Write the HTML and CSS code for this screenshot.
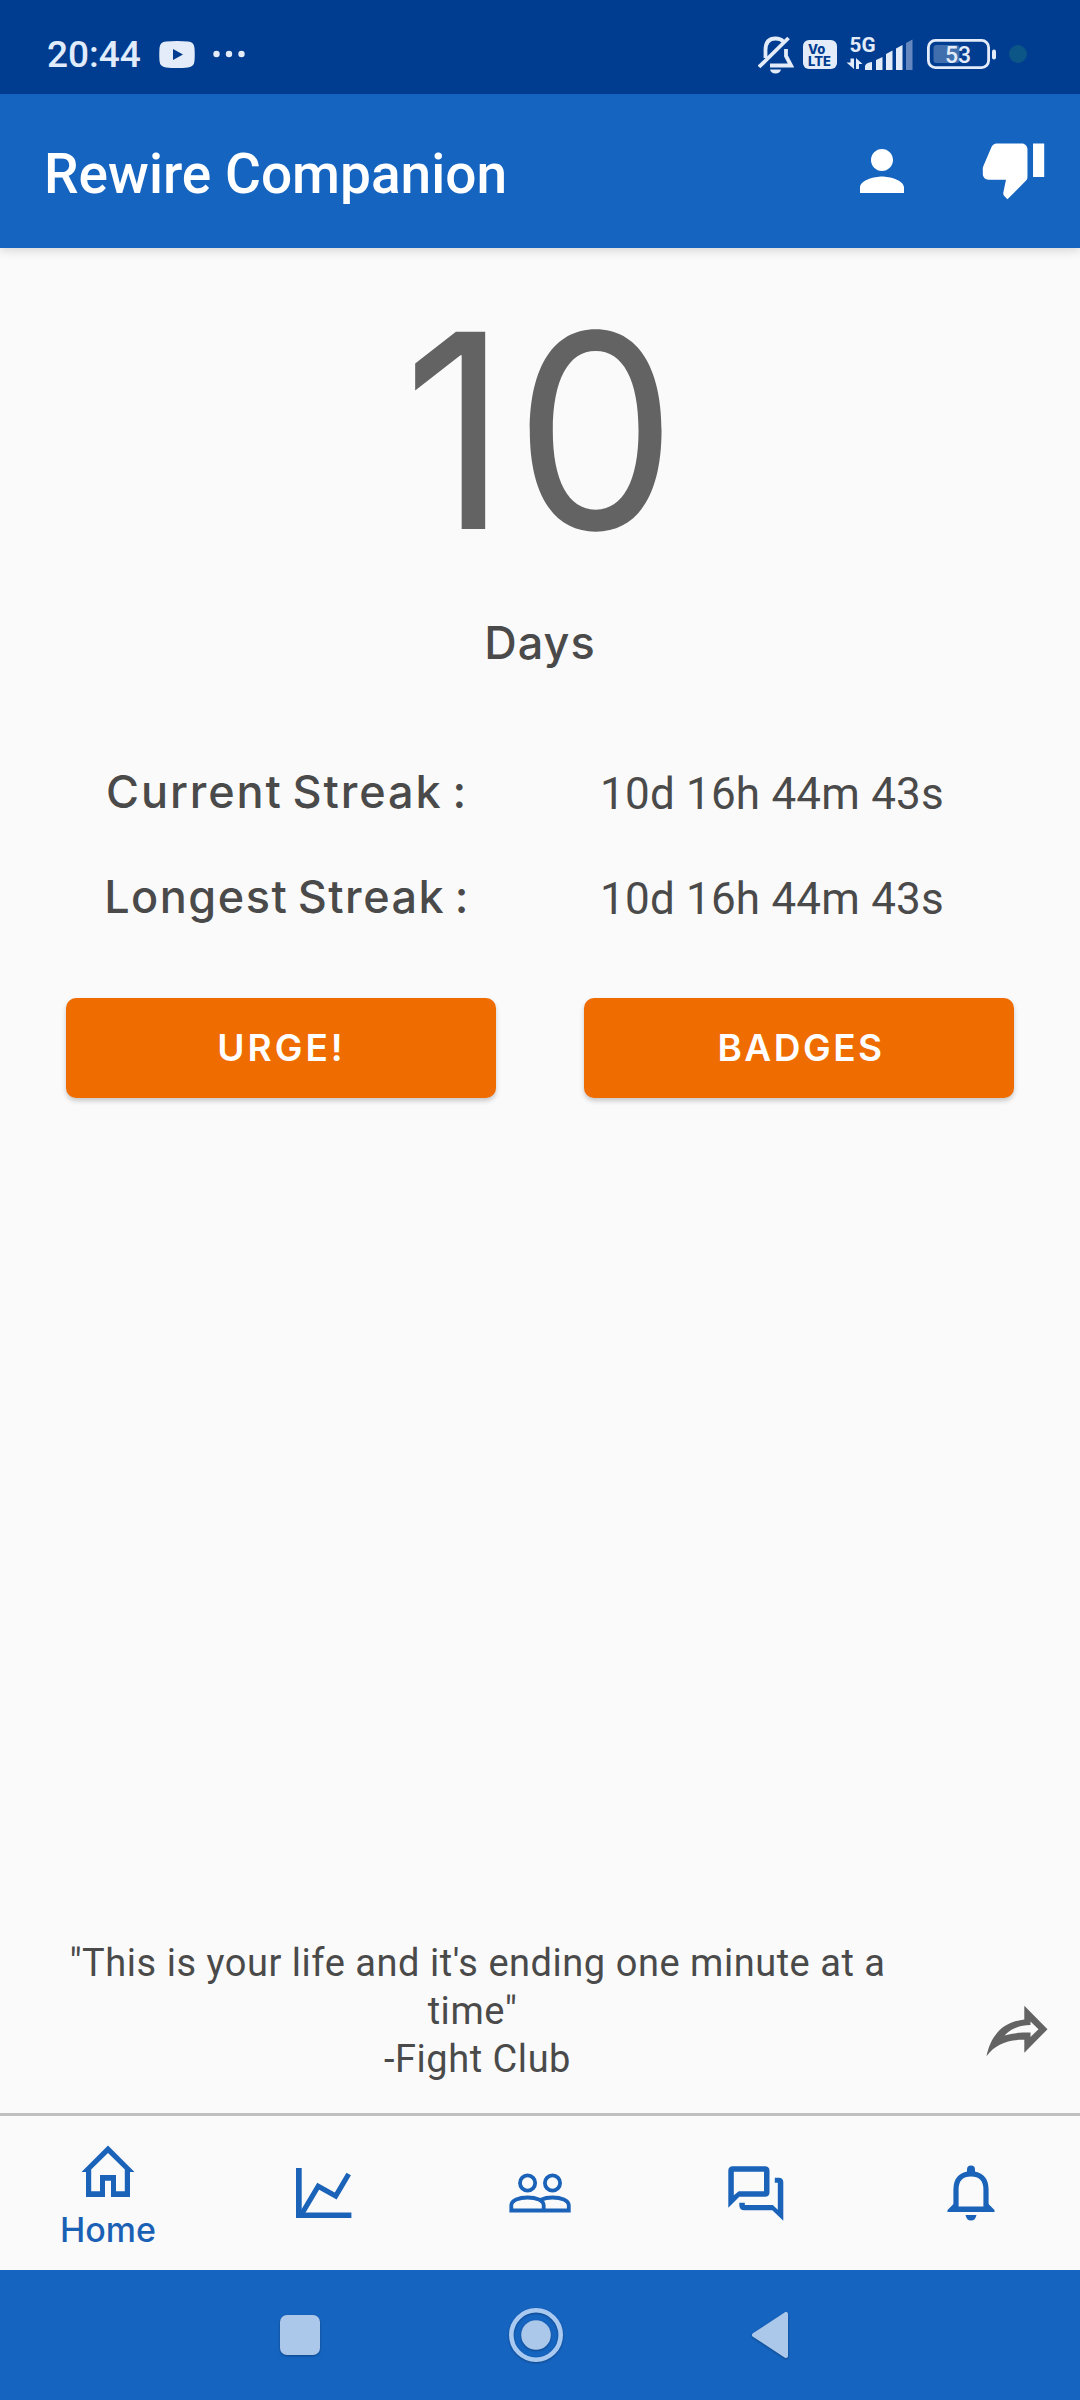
FILE: index.html
```html
<!DOCTYPE html>
<html lang="en">
<head>
<meta charset="utf-8">
<title>Rewire Companion</title>
<link rel="stylesheet" href="styles.css">
</head>
<body>
<div class="screen">
  <div class="status-bar">
    <div class="status-left">
      <span class="clock">20:44</span>
      <svg class="video-icon" width="36" height="27" viewBox="0 0 36 27"><path fill-rule="evenodd" d="M7 .6Q18-.5 29 .6Q35 1 35.500 7Q36 13.500 35.500 20Q35 26 29 26.400Q18 27.500 7 26.400Q1 26 .5 20Q0 13.500 .5 7Q1 1 7 .6ZM14 8V19L24 13.500Z"/></svg>
      <svg class="more-icon" width="32" height="8" viewBox="0 0 32 8"><circle cx="3.500" cy="4" r="3.200"/><circle cx="16" cy="4" r="3.200"/><circle cx="28.500" cy="4" r="3.200"/></svg>
    </div>
    <div class="status-right">
      <svg class="mute-icon" width="36" height="38" viewBox="758 36 36 38"><path class="line" d="M765.500 58V50C765.500 42 769.500 38.500 775.500 38.500C779 38.500 781.500 39.500 783.300 41.500M786 49V56L791 65.500H770"/><path class="line" d="M759 67L788.500 38"/><path d="M770 69.500H781Q780 73.500 775.500 73.500T770 69.500Z"/></svg>
      <div class="volte"><span>Vo</span><span>LTE</span></div>
      <svg class="signal" width="68" height="48" viewBox="846 30 68 48">
        <text class="net" x="849.500" y="52" textLength="26" lengthAdjust="spacingAndGlyphs">5G</text>
        <path d="M850.500 58.500H854V69L846.500 62.500H850.500ZM856 69V58L862.500 64H859V69Z"/>
        <path d="M865 70V66Q866 62.500 872 62V70ZM876 70V60L882.500 57V70ZM886 70V54L892.500 50.500V70ZM896 70V48.500L902.500 45V70Z"/>
        <path class="dim" d="M906 70V43L912.500 39.500V70Z"/>
      </svg>
      <svg class="battery" width="70" height="30" viewBox="927 39 70 30">
        <rect class="level" x="933.500" y="45" width="26" height="18" rx="3"/>
        <rect class="line" x="928.400" y="40.400" width="60.200" height="27.200" rx="7"/>
        <rect x="992" y="49.500" width="4" height="10" rx="2"/>
        <text class="pct" x="958" y="62.500" text-anchor="middle">53</text>
      </svg>
      <span class="privacy-dot"></span>
    </div>
  </div>

  <header class="app-bar">
    <h1 class="title">Rewire Companion</h1>
    <svg class="person-icon" width="66" height="66" viewBox="0 0 24 24"><path d="M12 12c2.210 0 4-1.790 4-4s-1.790-4-4-4-4 1.790-4 4 1.790 4 4 4zm0 2c-2.670 0-8 1.340-8 4v2h16v-2c0-2.660-5.330-4-8-4z"/></svg>
    <svg class="thumb-icon" width="67" height="67" viewBox="0 0 24 24"><path d="M15 3H6c-.83 0-1.540.5-1.840 1.220l-3.020 7.050c-.09.23-.14.47-.14.73v2c0 1.100.9 2 2 2h6.310l-.95 4.570-.03.320c0 .41.17.79.44 1.060L9.830 23l6.590-6.590c.36-.36.58-.86.58-1.410V5c0-1.100-.9-2-2-2zm4 0v12h4V3h-4z"/></svg>
  </header>

  <main class="content">
    <div class="count">10</div>
    <div class="unit">Days</div>
    <div class="streaks">
      <span class="streak-label">Current Streak :</span><span class="streak-value">10d 16h 44m 43s</span>
      <span class="streak-label long">Longest Streak :</span><span class="streak-value">10d 16h 44m 43s</span>
    </div>
    <div class="actions">
      <button class="action urge">URGE!</button>
      <button class="action">BADGES</button>
    </div>
    <div class="quote">
      <p class="quote-text">"This is your life and it's ending one minute at a<br>time"&nbsp;<br>-Fight Club</p>
      <svg class="share-icon" width="62" height="52" viewBox="986 2005.500 62 52"><path fill-rule="evenodd" d="M1024.300 2006.300L1047.500 2029.700L1024.300 2053.300V2040.200C1007 2040 995 2045 986.500 2056.700C990 2040 999 2023 1024.300 2020ZM1030.500 2022V2025.500C1019 2026 1011 2029 1004.500 2036C1012 2033.500 1020 2033 1030.500 2033V2037.500L1038.500 2029.700Z"/></svg>
    </div>
  </main>

  <nav class="tabs">
    <div class="tab home">
      <svg width="54" height="52" viewBox="81 2145 54 52"><path fill-rule="evenodd" d="M108 2145.500L134.500 2172H130V2197H111V2180.800H105V2197H86V2172H81.500ZM108 2153L91.200 2169.500V2191.300H100V2175H116V2191.300H124.800V2169.500Z"/></svg>
      <span>Home</span>
    </div>
    <div class="tab"><svg width="56" height="50" viewBox="296.300 2168 56 50"><path d="M296.300 2168H302V2212.500H351.700V2218H296.300Z"/><path class="line" d="M302 2214L318.500 2186.200L336 2196L349 2174"/></svg></div>
    <div class="tab people"><svg width="62" height="40" viewBox="509 2173.500 62 40"><g class="line thin"><circle cx="527.600" cy="2183.500" r="7.600"/><circle cx="552.500" cy="2183.500" r="7.600"/><path d="M511.300 2211V2206C511.300 2200.800 519 2198 527.600 2198S543.700 2200.800 543.700 2206V2211ZM541 2200.200C544 2198.800 548.500 2198 552.500 2198C561 2198 568.800 2200.800 568.800 2206V2211H543"/></g></svg></div>
    <div class="tab"><svg width="56" height="55" viewBox="728.200 2165.300 56 55"><path fill-rule="evenodd" d="M728.500 2207V2170Q728.500 2165.500 733 2165.500H765Q769.700 2165.500 769.700 2170V2191.500Q769.700 2196 765 2196H739.500ZM734 2194.500L739 2190.500H764.200V2171H734Z"/><path d="M775 2177H779Q783.500 2177 783.500 2181.500V2220L772.500 2209.500H744.500Q739.500 2209.500 739.500 2204.500V2202H745V2204.300H773L778 2209V2182H775Z"/></svg></div>
    <div class="tab bell"><svg width="48" height="56" viewBox="946.500 2165.500 48 56"><path class="line" d="M955.500 2209V2190C955.500 2180 961 2174.300 970.500 2174.300S985.500 2180 985.500 2190V2209"/><path d="M966.500 2174V2170Q966.500 2166 970.500 2166T974.500 2170V2174ZM947 2212.500V2210.500L953.500 2204V2207H987.500V2204L994 2210.500V2212.500ZM965 2215.500H976Q975 2221 970.500 2221T965 2215.500Z"/></svg></div>
  </nav>

  <div class="system-nav">
    <svg class="recent" width="40" height="40" viewBox="0 0 40 40"><rect width="40" height="40" rx="7"/></svg>
    <svg class="home-key" width="54" height="54" viewBox="0 0 54 54"><circle cx="27" cy="27" r="24.700"/><circle class="core" cx="27" cy="27" r="14.800"/></svg>
    <svg class="back" width="38" height="48" viewBox="0 0 38 48"><path d="M3 24L35 3V45Z"/></svg>
  </div>
</div>
</body>
</html>
```

FILE: styles.css
```css
* { box-sizing: border-box; }
body { margin: 0; font-family: Roboto, sans-serif; }
svg { display: block; flex: none; }

.screen {
  display: flex;
  flex-direction: column;
  width: 1080px;
  height: 2400px;
  background: #fafafa;
  overflow: hidden;
}

/* system status bar */
.status-bar {
  position: relative;
  z-index: 1;
  display: flex;
  justify-content: space-between;
  height: 94px;
  padding: 14px 53px 0 47px;
  background: #003c8f;
  fill: #e3ecf8;
}
.status-left, .status-right { display: flex; align-items: center; }
.clock {
  width: 112px;
  font-size: 37px;
  font-weight: 500;
  line-height: 46px;
  padding-top: 2px;
  color: #e0ebfb;
}
.more-icon { margin-left: 18px; }
.status-bar .line { fill: none; stroke: #e3ecf8; stroke-width: 3.8; }
.mute-icon { margin-right: 9px; margin-top: 2px; }
.volte {
  display: flex;
  flex-direction: column;
  width: 34px;
  height: 29px;
  margin-right: 9px;
  padding: 3px 0 0 5px;
  border-radius: 6px;
  background: #e3ecf8;
  color: #003c8f;
  font: 800 13px/12px Inter, sans-serif;
}
.signal .net { font: 700 20px Roboto, sans-serif; }
.signal .dim { fill: #6487bf; }
.battery { margin-left: 13px; }
.battery .level { fill: #416fae; }
.battery .pct { font: 500 23px Roboto, sans-serif; }
.status-bar .battery .line { stroke-width: 2.8; }
.privacy-dot {
  width: 18px;
  height: 18px;
  margin-left: 12px;
  border-radius: 50%;
  background: #0b5587;
}

/* app bar */
.app-bar {
  position: relative;
  display: flex;
  align-items: center;
  height: 154px;
  padding: 0 33px 0 44px;
  background: #1564c0;
  box-shadow: 0 2px 10px rgba(0, 0, 0, .16);
  fill: #fff;
}
.title {
  flex: 1;
  margin: 0;
  padding-top: 6px;
  font-size: 55px;
  font-weight: 500;
  line-height: 64px;
  color: #fff;
}
.thumb-icon { margin: -6px 0 0 65px; }

/* counter */
.content {
  display: flex;
  flex: 1;
  flex-direction: column;
  padding-top: 32px;
  color: #4a4a4a;
}
.count {
  height: 300px;
  font: 400 271px/300px Inter, sans-serif;
  letter-spacing: 7px;
  text-indent: 7px;
  text-align: center;
  color: #636363;
  transform: scaleX(.95);
}
.unit {
  margin-top: 33px;
  font: 500 45px/60px Inter, sans-serif;
  letter-spacing: 1px;
  text-align: center;
}
.streaks {
  display: grid;
  grid-template-columns: 486px 486px;
  row-gap: 45px;
  margin: 89px 0 0 43px;
  text-align: center;
}
.streak-label {
  font: 500 45px/60px Inter, sans-serif;
  letter-spacing: 1.9px;
  word-spacing: -4px;
  text-indent: 2px;
}
.streak-label.long { letter-spacing: 1.5px; }
.streak-value {
  padding-top: 4px;
  font-size: 44px;
  line-height: 56px;
  letter-spacing: .2px;
}
.actions {
  display: flex;
  justify-content: space-between;
  padding: 0 66px;
  margin-top: 71px;
}
.action {
  width: 430px;
  height: 100px;
  padding: 0;
  border: 0;
  border-radius: 10px;
  background: #ef6c00;
  box-shadow: 0 3px 5px rgba(0, 0, 0, .2);
  color: #fff;
  font: 600 37px/100px Inter, sans-serif;
  letter-spacing: 2.5px;
  text-indent: 4px;
}
.urge { letter-spacing: 3px; text-indent: 1px; }

/* quote */
.quote {
  display: flex;
  align-items: center;
  margin-top: auto;
  padding: 0 32px 30px 60px;
}
.quote-text {
  width: 835px;
  margin: 0;
  font-size: 38px;
  line-height: 48px;
  letter-spacing: .53px;
  text-align: center;
  white-space: nowrap;
}
.share-icon { margin: 39px 0 0 auto; fill: #636363; }

/* bottom tabs */
.tabs {
  display: grid;
  grid-template-columns: repeat(5, 216px);
  height: 157px;
  border-top: 3px solid #bfbfbf;
  background: #fafafa;
  color: #1a61b5;
  fill: #1a63b9;
}
.tab {
  display: flex;
  flex-direction: column;
  align-items: center;
  justify-content: center;
}
.tab .line { fill: none; stroke: #1a63b9; stroke-width: 5.2; }
.tab .thin { stroke-width: 3.8; }
.tab.home { justify-content: flex-start; padding-top: 29px; }
.tab.home span { margin-top: 12px; font: 500 34px/42px Inter, sans-serif; }
.bell { padding-right: 3px; }

/* system navigation */
.system-nav {
  display: flex;
  align-items: center;
  height: 130px;
  padding-left: 280px;
  background: #1564c0;
  fill: #abc7e9;
}
.system-nav svg { overflow: visible; filter: drop-shadow(0 1px 1px rgba(0, 0, 0, .3)); }
.home-key { margin-left: 189px; fill: none; stroke: #a9c9f1; stroke-width: 4.6; }
.home-key .core { fill: #abc7e9; stroke: none; }
.back { margin-left: 188px; stroke: #abc7e9; stroke-width: 4; stroke-linejoin: round; }
```
